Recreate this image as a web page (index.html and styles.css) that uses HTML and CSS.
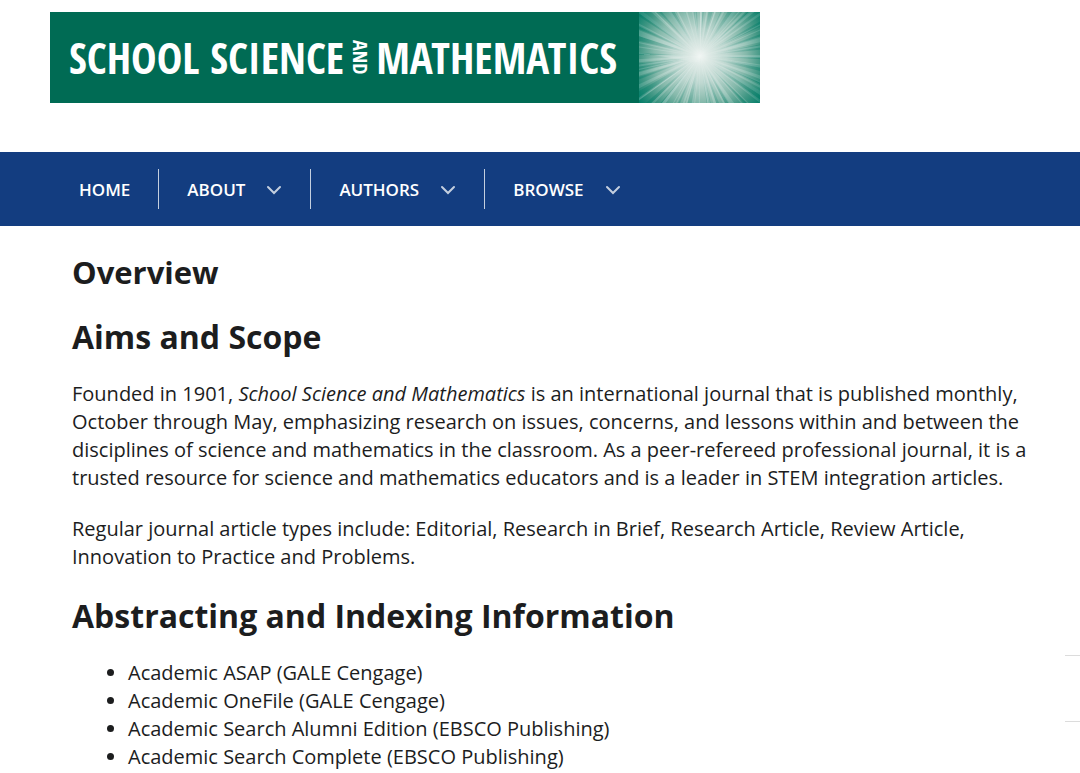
FILE: index.html
```html
<!DOCTYPE html>
<html lang="en">
<head>
<meta charset="utf-8">
<meta name="viewport" content="width=device-width, initial-scale=1">
<title>School Science and Mathematics</title>
<link rel="stylesheet" href="styles.css">
</head>
<body>
<header class="masthead">
  <a class="banner" href="#">
    <span class="wordmark"><span>SCHOOL SCIENCE</span><span class="wordmark-and">AND</span><span>MATHEMATICS</span></span>
    <svg class="burst" viewBox="0 0 121 91" preserveAspectRatio="xMidYMid slice" aria-hidden="true">
      <defs>
        <radialGradient id="glow" gradientUnits="userSpaceOnUse" cx="61" cy="44" r="77">
          <stop offset="0" stop-color="#f1f6f4"/>
          <stop offset=".12" stop-color="#dde9e5"/>
          <stop offset=".35" stop-color="#bfd8d1"/>
          <stop offset=".6" stop-color="#85b9ab"/>
          <stop offset=".8" stop-color="#3f9683"/>
          <stop offset="1" stop-color="#007c67"/>
        </radialGradient>
        <radialGradient id="light" gradientUnits="userSpaceOnUse" cx="61" cy="44" r="77">
          <stop offset="0" stop-color="#fff" stop-opacity=".05"/>
          <stop offset=".5" stop-color="#fff" stop-opacity=".22"/>
          <stop offset="1" stop-color="#fff" stop-opacity=".1"/>
        </radialGradient>
        <radialGradient id="shade" gradientUnits="userSpaceOnUse" cx="61" cy="44" r="77">
          <stop offset=".2" stop-color="#007c67" stop-opacity="0"/>
          <stop offset=".6" stop-color="#007c67" stop-opacity=".22"/>
          <stop offset="1" stop-color="#007c67" stop-opacity=".5"/>
        </radialGradient>
        <filter id="soft" filterUnits="userSpaceOnUse" x="-30" y="-50" width="190" height="190"><feGaussianBlur stdDeviation=".5"/></filter>
      </defs>
      <rect width="121" height="91" fill="url(#glow)"/>
      <g fill="none" stroke-width="80" filter="url(#soft)">
        <circle cx="61" cy="44" r="40" pathLength="360" stroke="url(#shade)" stroke-dasharray="3 6 5 9 2 5 7 8 2 11 4 6"/>
        <circle cx="61" cy="44" r="40" pathLength="360" stroke="url(#light)" stroke-dasharray="2 6 1 9 3 5 2 8"/>
        <circle cx="61" cy="44" r="40" pathLength="360" stroke="url(#light)" stroke-dasharray="1 8 2 12 1 6 3 15"/>
      </g>
    </svg>
  </a>
</header>
<nav class="menu" aria-label="Main">
  <ul class="menu-list">
    <li class="menu-item"><a class="menu-link" href="#">HOME</a></li>
    <li class="menu-item"><button class="menu-link" type="button">ABOUT<svg class="chevron" viewBox="0 0 16 10" aria-hidden="true"><path d="M2 2l6 6 6-6"/></svg></button></li>
    <li class="menu-item"><button class="menu-link" type="button">AUTHORS<svg class="chevron" viewBox="0 0 16 10" aria-hidden="true"><path d="M2 2l6 6 6-6"/></svg></button></li>
    <li class="menu-item"><button class="menu-link" type="button">BROWSE<svg class="chevron" viewBox="0 0 16 10" aria-hidden="true"><path d="M2 2l6 6 6-6"/></svg></button></li>
  </ul>
</nav>
<main class="content">
  <h1 class="heading heading-page">Overview</h1>
  <h2 class="heading">Aims and Scope</h2>
  <p class="text">Founded in 1901, <em>School Science and Mathematics</em> is an international journal that is published monthly, October through May, emphasizing research on issues, concerns, and lessons within and between the disciplines of science and mathematics in the classroom. As a peer-refereed professional journal, it is a trusted resource for science and mathematics educators and is a leader in STEM integration articles.</p>
  <p class="text">Regular journal article types include: Editorial, Research in Brief, Research Article, Review Article, Innovation to Practice and Problems.</p>
  <h2 class="heading">Abstracting and Indexing Information</h2>
  <ul class="index-list">
    <li>Academic ASAP (GALE Cengage)</li>
    <li>Academic OneFile (GALE Cengage)</li>
    <li>Academic Search Alumni Edition (EBSCO Publishing)</li>
    <li>Academic Search Complete (EBSCO Publishing)</li>
  </ul>
</main>
<aside class="side-tab"></aside>
</body>
</html>
```
FILE: styles.css
```css
* {
  box-sizing: border-box;
}

body {
  margin: 0;
  background: #fff;
  color: #1c1d1e;
  font: 20px/28px "Open Sans", sans-serif;
}

.masthead {
  padding: 12px 50px 49px;
}

.banner {
  display: flex;
  justify-content: space-between;
  max-width: 710px;
  background: #006b54;
  color: #fff;
  text-decoration: none;
}

.wordmark {
  display: flex;
  align-items: center;
  gap: 6px;
  padding-left: 19px;
  font: bold 43px/48px "Open Sans Condensed", "Liberation Sans Narrow", "Liberation Sans", sans-serif;
  white-space: nowrap;
}

.wordmark-and {
  font-size: 20px;
  line-height: 20px;
  writing-mode: vertical-rl;
}

.burst {
  flex: none;
  width: 121px;
  height: 91px;
}

.menu {
  padding: 17px 51px;
  background: #133d80;
}

.menu-list {
  display: flex;
  margin: 0;
  padding: 0;
  list-style: none;
}

.menu-item + .menu-item {
  border-left: 1px solid #c4cfdf;
}

.menu-link {
  display: flex;
  align-items: center;
  gap: 21px;
  height: 40px;
  padding: 1px 28px 0;
  border: 0;
  background: none;
  color: #fff;
  font: 600 17px/24px "Open Sans", sans-serif;
  text-decoration: none;
}

.chevron {
  width: 16px;
  height: 10px;
  fill: none;
  stroke: #c4cfdf;
  stroke-width: 2;
  stroke-linecap: round;
}

.content {
  padding: 24px 50px 0 72px;
}

.heading {
  margin: 0 0 21px;
  font-size: 32px;
  line-height: 44px;
}

.heading-page {
  font-size: 31px;
}

.text {
  margin: 0 0 23px;
}

.index-list {
  margin: 0;
  padding-left: 56px;
}

.side-tab {
  position: absolute;
  top: 655px;
  right: 0;
  width: 15px;
  height: 67px;
  border: solid #dcdcdc;
  border-width: 1px 0;
}
```
